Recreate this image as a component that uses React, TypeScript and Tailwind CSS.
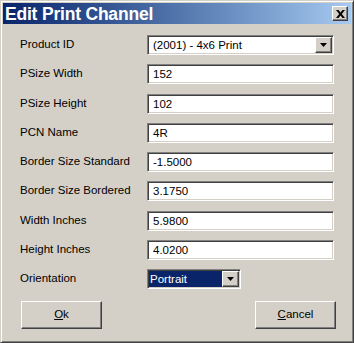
import React from 'react';

const rows: { label: string; value: string }[] = [
  { label: 'PSize Width', value: '152' },
  { label: 'PSize Height', value: '102' },
  { label: 'PCN Name', value: '4R' },
  { label: 'Border Size Standard', value: '-1.5000' },
  { label: 'Border Size Bordered', value: '3.1750' },
  { label: 'Width Inches', value: '5.9800' },
  { label: 'Height Inches', value: '4.0200' },
];

const sunken =
  'border border-t-[#808080] border-l-[#808080] border-b-white border-r-white shadow-[inset_1px_1px_#404040,inset_-1px_-1px_#d4d0c8]';
const raised =
  'border border-t-white border-l-white border-b-[#404040] border-r-[#404040] shadow-[inset_-1px_-1px_#808080,inset_1px_1px_#d4d0c8]';

const Arrow = () => (
  <svg width="7" height="4" viewBox="0 0 7 4">
    <path d="M0 0h7L3.5 4z" fill="#000" />
  </svg>
);

const Label = ({ text }: { text: string }) => (
  <div className="w-[127px] pt-[1px] text-[11.5px] leading-[16px] text-black">{text}</div>
);

export default function App() {
  return (
    <div className="w-[354px] h-[343px] bg-[#d4d0c8] font-['Liberation_Sans',Arial,sans-serif]">
      <div className="w-[354px] h-[343px] flex flex-col border border-t-[#d4d0c8] border-l-[#d4d0c8] border-b-[#404040] border-r-[#404040] shadow-[inset_1px_1px_white,inset_-1px_-1px_#808080] p-[2px]">
        {/* title bar */}
        <div className="h-[21px] flex items-center justify-between bg-gradient-to-r from-[#0a246a] to-[#a6caf0] pl-[2px] pr-[3px]">
          <span className="text-white font-bold text-[17.5px] leading-[20px] tracking-[-0.2px]">Edit Print Channel</span>
          <div className={`w-[16px] h-[15px] bg-[#d4d0c8] flex items-center justify-center ${raised}`}>
            <svg width="9" height="8" viewBox="0 0 9 8">
              <path d="M0 0h2.5l2 2.6L6.5 0H9L5.8 4 9 8H6.5l-2-2.6-2 2.6H0l3.2-4z" fill="#000" />
            </svg>
          </div>
        </div>

        {/* form */}
        <div className="flex flex-col gap-[9.25px] pl-[17px] pt-[11px]">
          <div className="flex items-start">
            <Label text="Product ID" />
            <div className={`w-[187px] h-[20px] bg-white flex items-center ${sunken}`}>
              <span className="flex-1 pl-[5px] text-[11.5px] leading-[16px] text-black">(2001) - 4x6 Print</span>
              <div className={`w-[17px] h-[16px] mr-[1px] bg-[#d4d0c8] flex items-center justify-center ${raised}`}>
                <Arrow />
              </div>
            </div>
          </div>

          {rows.map((r) => (
            <div key={r.label} className="flex items-start">
              <Label text={r.label} />
              <div className={`w-[187px] h-[20px] bg-white flex items-center ${sunken}`}>
                <span className="pl-[5px] text-[11.5px] leading-[16px] text-black">{r.value}</span>
              </div>
            </div>
          ))}

          <div className="flex items-start">
            <Label text="Orientation" />
            <div className={`w-[94px] h-[20px] bg-white flex items-center ${sunken}`}>
              <div className="flex-1 h-[16px] ml-[1px] bg-[#0a246a] flex items-center">
                <span className="pl-[1px] text-[11.5px] leading-[16px] text-white">Portrait</span>
              </div>
              <div className={`w-[17px] h-[16px] mr-[1px] bg-[#d4d0c8] flex items-center justify-center ${raised}`}>
                <Arrow />
              </div>
            </div>
          </div>
        </div>

        {/* buttons */}
        <div className="flex justify-between pl-[18px] pr-[15px] pt-[12px]">
          <button className={`w-[81px] h-[28px] bg-[#d4d0c8] flex items-center justify-center text-[11.5px] text-black ${raised}`}>
            <span><span className="underline">O</span>k</span>
          </button>
          <button className={`w-[81px] h-[28px] bg-[#d4d0c8] flex items-center justify-center text-[11.5px] text-black ${raised}`}>
            <span><span className="underline">C</span>ancel</span>
          </button>
        </div>
      </div>
    </div>
  );
}
